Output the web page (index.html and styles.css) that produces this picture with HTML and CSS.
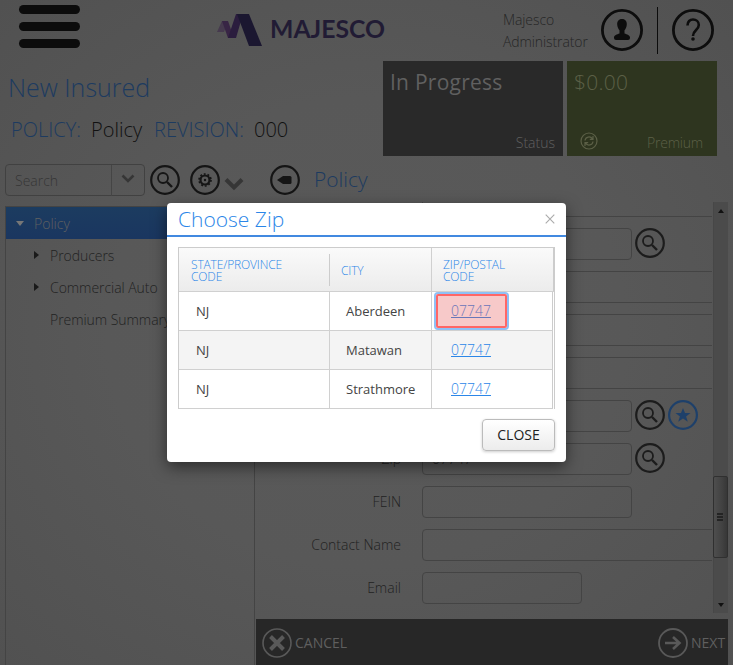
FILE: index.html
```html
<!DOCTYPE html>
<html lang="en">
<head>
<meta charset="utf-8">
<title>Majesco</title>
<link rel="stylesheet" href="styles.css">
</head>
<body>
<svg width="0" height="0" class="defs">
  <symbol id="search" viewBox="0 0 30 30"><circle cx="15" cy="15" r="13.8" fill="none" stroke="currentColor" stroke-width="2.2"/><circle cx="13" cy="13" r="5" fill="none" stroke="currentColor" stroke-width="1.8"/><path d="M17 17l5 5" fill="none" stroke="currentColor" stroke-width="2.4"/></symbol>
</svg>
<div class="app">
  <header class="top">
    <div class="burger"><i></i><i></i><i></i></div>
    <svg class="logo" width="170" height="36" viewBox="0 0 170 36">
      <path d="M5 9h6L7 20H0z" fill="#463a4e"/><path d="M5 9h6l6 17h-6z" fill="#382545"/><path d="M20 2h6l-7 24h-8l8-24z" fill="#2b1d3e"/><path d="M20 2h12l13 32H32z" fill="#1b1730"/>
      <text x="53" y="26" textLength="115" lengthAdjust="spacingAndGlyphs">MAJESCO</text>
    </svg>
    <div class="user">Majesco<br>Administrator</div>
    <svg class="avatar" width="42" height="42" viewBox="0 0 42 42"><circle cx="21" cy="21" r="19.6" fill="none" stroke="#0d0d0d" stroke-width="2.8"/><path d="M21 10c3.500 0 5 2.500 4.800 5.500-.1 2.500-1.200 4.500-2.300 5.700v3.300c2.500 1 5.500 1.500 5.500 4V29q0 2-2 2H15q-2 0-2-2v-.5c0-2.500 3-3 5.500-4v-3.300c-1.100-1.200-2.200-3.200-2.300-5.700C16 12.500 17.500 10 21 10z" fill="#0d0d0d"/></svg>
    <div class="rule"></div>
    <svg class="help" width="42" height="42" viewBox="0 0 42 42"><circle cx="21" cy="21" r="19.600" fill="none" stroke="#0d0d0d" stroke-width="2.800"/><path d="M15.500 16.500c0-4 2.500-6 5.500-6s5.800 2 5.800 5.500c0 5-5.800 5-5.800 11" fill="none" stroke="#0d0d0d" stroke-width="2.600"/><circle cx="21" cy="30" r="1.800" fill="#0d0d0d"/></svg>
  </header>
  <section class="summary">
    <div class="titles">
      <h1>New Insured</h1>
      <p><span class="k1">POLICY:</span><span class="k2">Policy</span><span class="k3">REVISION:</span><span class="k4">000</span></p>
    </div>
    <div class="tile status"><b>In Progress</b><span>Status</span></div>
    <div class="tile premium"><b>$0.00</b>
      <div class="prow"><svg width="18" height="18" viewBox="0 0 18 18" fill="none" stroke="#5c6047" stroke-width="1.200"><circle cx="9" cy="9" r="8"/><path d="M5 8.500c.4-4 5.500-4.600 7.500-1.700M13 9.500c-.4 4-5.500 4.600-7.500 1.700M13 4v3.300H9.800M5 14v-3.300h3.200"/></svg><span>Premium</span></div>
    </div>
  </section>
  <section class="tools">
    <div class="find"><span>Search</span><i><svg width="14" height="10" viewBox="0 0 14 10"><path d="M1.500 1.500L7 7 12.500 1.500" fill="none" stroke="#363636" stroke-width="2.600"/></svg></i></div>
    <svg class="t1" width="30" height="30"><use href="#search"/></svg>
    <svg class="t2" width="30" height="30" viewBox="0 0 30 30" fill="none" stroke="currentColor"><circle cx="15" cy="15" r="13.800" stroke-width="2.200"/><circle cx="15" cy="15" r="4.500" stroke-width="2.200"/><circle cx="15" cy="15" r="6" stroke-width="1.600" stroke-dasharray="1.880 1.880"/><circle cx="15" cy="15" r="1.200" fill="currentColor" stroke="none"/></svg>
    <svg class="t3" width="20" height="14" viewBox="0 0 20 14"><path d="M2 2.500l8 8 8-8" fill="none" stroke="#363636" stroke-width="4"/></svg>
    <svg class="t4" width="30" height="30" viewBox="0 0 30 30"><circle cx="15" cy="15" r="13.800" fill="none" stroke="currentColor" stroke-width="2.200"/><path d="M7 15l6-4h7q1.500 0 1.500 1.500v5q0 1.500-1.500 1.500h-7z" fill="currentColor"/></svg>
    <h2>Policy</h2>
  </section>
  <main class="work">
    <nav class="tree">
      <div class="node sel"><i class="down"></i>Policy</div>
      <div class="node sub"><i class="right"></i>Producers</div>
      <div class="node sub"><i class="right"></i>Commercial Auto</div>
      <div class="node sub leaf">Premium Summary</div>
    </nav>
    <div class="pane">
      <div class="scroller">
        <div class="form">
          <div class="row cut"><label></label><div class="field wide"></div></div>
          <div class="row"><label></label><div class="field"></div><svg class="ic" width="30" height="30"><use href="#search"/></svg></div>
          <div class="row"><label></label><div class="field wide"></div></div>
          <div class="row"><label></label><div class="field wide"></div></div>
          <div class="row"><label></label><div class="field wide"></div></div>
          <div class="row"><label></label><div class="field"></div><svg class="ic" width="30" height="30"><use href="#search"/></svg><svg class="star" width="30" height="30" viewBox="0 0 30 30"><circle cx="15" cy="15" r="13.900" fill="none" stroke="#1e406a" stroke-width="2.200"/><path d="M15 8l2 5h5.500l-4.400 3.400 1.700 5.400-4.800-3.300-4.800 3.300 1.700-5.400L7.500 13H13z" fill="#1e406a"/></svg></div>
          <div class="row"><label>Zip</label><div class="field">07747</div><svg class="ic" width="30" height="30"><use href="#search"/></svg></div>
          <div class="row"><label>FEIN</label><div class="field"></div></div>
          <div class="row"><label>Contact Name</label><div class="field wide"></div></div>
          <div class="row"><label>Email</label><div class="field short"></div></div>
        </div>
        <div class="bar"><i class="up"></i><div class="thumb"><i></i><i></i><i></i></div><i class="dn"></i></div>
      </div>
      <footer>
        <svg width="30" height="30" viewBox="0 0 30 30" fill="none" stroke="#595959"><circle cx="15" cy="15" r="14" stroke-width="1.600"/><path d="M8.500 8.500l13 13M21.500 8.500l-13 13" stroke-width="4"/></svg><span class="cancel">CANCEL</span>
        <svg class="go" width="30" height="30" viewBox="0 0 30 30" fill="none" stroke="#595959"><circle cx="15" cy="15" r="14" stroke-width="1.800"/><path d="M7 15h14M15 9l6.500 6-6.500 6" stroke-width="2.600"/></svg><span class="next">NEXT</span>
      </footer>
    </div>
  </main>
</div>
<div class="modal">
  <div class="mhead"><h3>Choose Zip</h3><svg width="10" height="10" viewBox="0 0 10 10"><path d="M.7.7l8.600 8.600M9.300.7L.7 9.300" stroke="#aaa" stroke-width="1.100"/></svg></div>
  <div class="table">
    <div class="tr th"><span>STATE/PROVINCE<br>CODE</span><span class="mid">CITY</span><span>ZIP/POSTAL<br>CODE</span></div>
    <div class="tr"><span>NJ</span><span>Aberdeen</span><span class="on"><a>07747</a></span></div>
    <div class="tr alt"><span>NJ</span><span>Matawan</span><span><a>07747</a></span></div>
    <div class="tr"><span>NJ</span><span>Strathmore</span><span><a>07747</a></span></div>
  </div>
  <button class="close">CLOSE</button>
</div>
</body>
</html>
```
FILE: styles.css
```css
*, *::before, *::after { box-sizing: border-box; }
body { margin: 0; width: 733px; height: 665px; overflow: hidden; position: relative; font-family: "Open Sans", sans-serif; font-weight: 300; font-size: 14px; color: #222; background: radial-gradient(ellipse at 50% 50%, #5a5a5a 0%, #585858 50%, #515151 100%); }
.defs { position: absolute; }
svg { display: block; flex: none; }
h1, h2, h3, p { margin: 0; font-weight: 300; }
.app { height: 665px; display: flex; flex-direction: column; }
.top { height: 61px; flex: none; display: flex; align-items: flex-start; padding-left: 19px; }
.burger { width: 61px; padding-top: 5px; display: grid; gap: 8px; }
.burger i { height: 9px; border-radius: 5px; background: #0c0c0c; }
.logo { margin: 12px 0 0 137px; }
.logo text { font: 700 24px Lato, sans-serif; fill: #211b34; }
.user { width: 98px; margin: 9px 0 0 116px; line-height: 22px; font-size: 14px; letter-spacing: -0.1px; color: #262626; }
.avatar, .help { margin-top: 9px; }
.rule { width: 1px; height: 47px; background: #0c0c0c; margin: 7px 14px 0; }
.summary { height: 95px; flex: none; display: flex; gap: 4px; }
.titles { width: 379px; color: #1d3b60; white-space: nowrap; }
h1 { font-size: 25px; line-height: 34px; padding: 9px 0 0 8px; }
.titles p { font-size: 20px; line-height: 28px; margin-top: 12px; padding-left: 11px; display: flex; }
.k1 { width: 80px; }
.k2 { width: 63px; color: #111; }
.k3 { width: 100px; }
.k4 { color: #111; }
.tile { display: flex; flex-direction: column; justify-content: space-between; padding: 6px 8px 1px 7px; color: #606060; line-height: 24px; }
.tile b { font-weight: 400; font-size: 21px; line-height: 30px; letter-spacing: .25px; }
.status { width: 180px; background: #292929; align-items: flex-end; }
.status b { align-self: flex-start; }
.premium { width: 150px; background: #2e351f; color: #5c6047; padding-right: 14px; }
.premium b { font-weight: 300; }
.prow { display: flex; justify-content: space-between; align-items: center; padding-left: 6px; letter-spacing: -0.2px; }
.prow svg { margin-top: -4px; }
.tools { height: 50px; flex: none; display: flex; align-items: flex-start; padding: 8px 0 0 5px; color: #151515; }
.find { width: 140px; height: 32px; border: 1px solid #414141; border-radius: 4px; display: flex; justify-content: space-between; align-items: center; padding-left: 9px; color: #353535; }
.find i { height: 31px; width: 33px; border-left: 1px solid #454545; padding: 9px 0 0 9px; }
.t1 { margin: 1px 0 0 5px; }
.t2 { margin: 1px 0 0 10px; }
.t3 { margin: 13px 0 0 4px; }
.t4 { margin: 1px 0 0 26px; }
h2 { font-size: 21px; line-height: 31px; margin-left: 14px; color: #1d3b60; }
.work { flex: 1; display: flex; padding-left: 5px; min-height: 0; }
.tree { width: 250px; border: 1px solid #444; border-width: 1px 1px 0; }
.node { height: 32px; line-height: 33px; display: flex; align-items: center; padding-left: 10px; }
.node.sel { background: linear-gradient(#1c3c60, #1a3660); color: #606060; gap: 10px; }
.node.sub { padding-left: 28px; gap: 11px; letter-spacing: -0.05px; }
.node.leaf { padding-left: 44px; }
.down { border: 4px solid transparent; border-top: 5px solid #777; border-bottom: 0; }
.right { border: 4px solid transparent; border-left: 5px solid #1a1a1a; border-right: 0; }
.pane { width: 473px; padding-left: 1px; display: flex; flex-direction: column; }
.scroller { height: 417px; flex: none; display: flex; justify-content: space-between; overflow: hidden; margin-top: -4px; }
.form { width: 456px; overflow: hidden; }
.row { height: 43px; display: flex; align-items: center; }
.row.cut { margin-top: -23px; }
.row label { width: 145px; flex: none; text-align: right; margin-right: 21px; }
.field { width: 210px; height: 32px; border: 1px solid #444; border-radius: 4px; padding-left: 9px; line-height: 30px; flex: none; }
.field.wide { width: 300px; }
.field.short { width: 160px; }
.ic { margin: -2px 0 0 3px; color: #1c1c1c; }
.star { margin: -2px 0 0 3px; }
.bar { width: 15px; background: #4b4b4b; position: relative; height: 411px; border-left: 1px solid #474747; }
.thumb { position: absolute; top: 274px; left: -1px; width: 15px; height: 82px; border: 1px solid #303030; border-radius: 2px; background: linear-gradient(90deg, #4e4e4e, #424242 60%, #373737); padding: 36px 4px 0 3px; display: grid; gap: 1px; align-content: start; }
.thumb i { height: 2px; background: #242424; }
.up, .dn { position: absolute; left: 4px; border: 3.500px solid transparent; }
.up { top: 7px; border-bottom: 4px solid #111; border-top: 0; }
.dn { bottom: 6px; border-top: 4px solid #111; border-bottom: 0; }
footer { flex: 1; width: 472px; background: #272727; display: flex; align-items: center; padding: 1px 2px 0 6px; color: #5f5f5f; font-weight: 400; white-space: nowrap; }
.cancel { margin-left: 3px; }
.go { margin-left: auto; }
.next { margin-left: 3px; width: 35px; }
.modal { position: absolute; left: 167px; top: 203px; width: 399px; height: 259px; border-radius: 4px; background: #fff; box-shadow: 0 5px 15px rgba(0,0,0,.5); display: flex; flex-direction: column; align-items: flex-start; }
.mhead { width: 399px; height: 34px; border-bottom: 2px solid #4189e0; display: flex; justify-content: space-between; align-items: center; padding: 0 11px; flex: none; }
h3 { font-size: 21px; line-height: 32px; color: #2b86e8; }
.mhead svg { margin-top: -1px; }
.table { margin: 10px 0 0 11px; width: 377px; border: 1px solid #ccc; border-bottom: 0; }
.tr { display: grid; grid-template-columns: 151px 102px 1fr; height: 39px; width: 374px; border-right: 1px solid #ccc; border-bottom: 1px solid #d0d0d0; }
.tr > span { display: flex; align-items: center; padding-left: 17px; border-right: 1px solid #d0d0d0; font-size: 13px; font-weight: 400; color: #444; }
.tr > span:nth-child(2) { padding-left: 16px; }
.tr > span:last-child { padding-left: 19px; border-right: 0; }
.tr.th { height: 44px; width: 375px; border-right: 0; background: linear-gradient(#fafafa, #ececec); box-shadow: inset -1px 0 #ccc; }
.tr.th > span { display: block; font-size: 12px; line-height: 12px; letter-spacing: -0.15px; font-weight: 300; color: #2b86e8; padding: 11px 0 0 12px; }
.tr.th > span:first-child { border-right: 0; }
.tr.th > .mid { padding: 17px 0 0 11px; position: relative; }
.mid::before { content: ""; position: absolute; left: -1px; top: 6px; height: 32px; width: 1px; background: #ccc; }
.tr.th > span:last-child { padding-left: 11px; }
.alt { background: #f4f4f4; }
.tr a { font-size: 14px; font-weight: 300; color: #2b86e8; text-decoration: underline; margin-top: -2px; }
.on { position: relative; }
.on::after { content: ""; position: absolute; left: 4px; top: 2px; width: 71px; height: 34px; border: 2px solid #f66; background: rgba(230,90,90,.33); box-shadow: 0 0 0 2px #8fc0f5; border-radius: 2px; }
.close { position: absolute; right: 11px; bottom: 11px; width: 73px; height: 32px; border: 1px solid #bbb; border-radius: 4px; background: linear-gradient(#fff, #ececec); box-shadow: 0 1px 3px rgba(0,0,0,.2); font: 400 14px "Open Sans", sans-serif; color: #222; padding: 0 0 2px; }
```
